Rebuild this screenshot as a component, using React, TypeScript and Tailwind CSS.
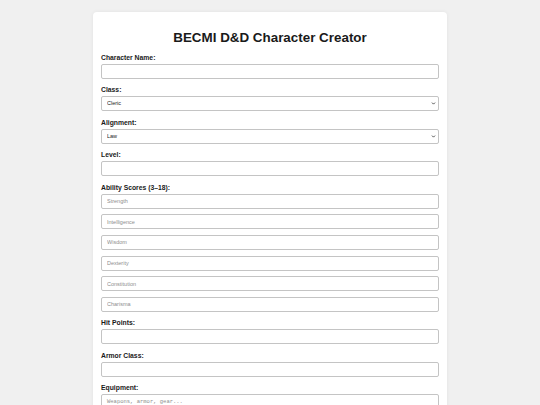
import { ChevronDown } from 'lucide-react';

const abilities = ['Strength', 'Intelligence', 'Wisdom', 'Dexterity', 'Constitution', 'Charisma'];

const inputCls =
    'block h-[15px] w-full rounded-[2px] border border-[#c4c4c4] bg-white px-[5px] text-[5.5px] text-[#222] placeholder:text-[#8e8e8e] outline-none';

function Label({ children }: { children: React.ReactNode }) {
    return <label className="mb-[2px] block h-[8px] text-[6.8px] font-bold leading-[8px] text-[#1a1a1a]">{children}</label>;
}

function SelectField({ label, value, options }: { label: string; value: string; options: string[] }) {
    return (
        <div className="mb-[7.5px]">
            <Label>{label}</Label>
            <div className="relative">
                <select defaultValue={value} className={`${inputCls} appearance-none`}>
                    {options.map((o) => (
                        <option key={o}>{o}</option>
                    ))}
                </select>
                <ChevronDown
                    size={5}
                    strokeWidth={4}
                    className="pointer-events-none absolute right-[3px] top-[5px] text-[#333]"
                />
            </div>
        </div>
    );
}

function TextField({ label }: { label: string }) {
    return (
        <div className="mb-[7.5px]">
            <Label>{label}</Label>
            <input type="text" className={inputCls} />
        </div>
    );
}

export default function App() {
    return (
        <div className="min-h-screen bg-[#f0f0f0] py-[12px] font-['Liberation_Sans',Arial,sans-serif]">
            <div className="mx-auto w-[354px] rounded-[4px] bg-white px-[8px] pb-[16px] pt-[17.5px] shadow-[0_0_4px_rgba(0,0,0,0.06)]">
                <h1 className="mb-[9px] text-center text-[13.4px] font-bold leading-[15px] text-[#1a1a1a]">
                    BECMI D&amp;D Character Creator
                </h1>

                <TextField label="Character Name:" />
                <SelectField label="Class:" value="Cleric" options={['Cleric', 'Fighter', 'Magic-User', 'Thief', 'Dwarf', 'Elf', 'Halfling']} />
                <SelectField label="Alignment:" value="Law" options={['Law', 'Neutrality', 'Chaos']} />
                <TextField label="Level:" />

                <div className="mb-[7.5px]">
                    <Label>Ability Scores (3–18):</Label>
                    <div className="flex flex-col gap-[5.7px]">
                        {abilities.map((a) => (
                            <input key={a} type="number" placeholder={a} className={inputCls} />
                        ))}
                    </div>
                </div>

                <TextField label="Hit Points:" />
                <TextField label="Armor Class:" />

                <div>
                    <Label>Equipment:</Label>
                    <textarea
                        placeholder="Weapons, armor, gear..."
                        rows={4}
                        className="block h-[60px] w-full resize-none rounded-[2px] border border-[#c4c4c4] bg-white px-[5px] py-[3px] font-['Liberation_Mono',monospace] text-[5.5px] leading-[7px] text-[#222] placeholder:text-[#8e8e8e] outline-none"
                    />
                </div>
            </div>
        </div>
    );
}
